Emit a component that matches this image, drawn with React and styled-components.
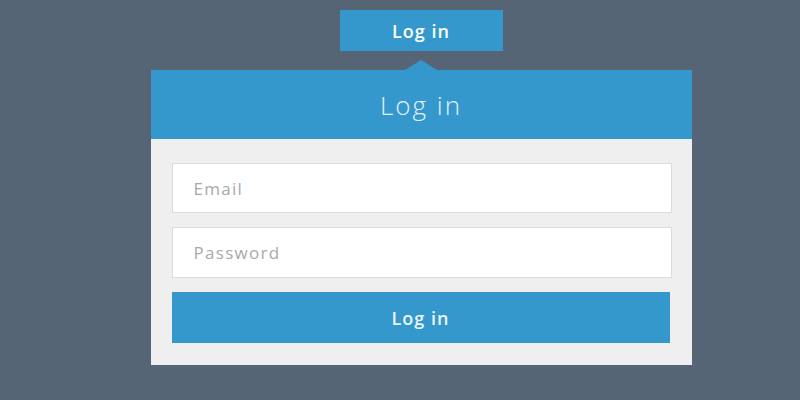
import React from "react";
import styled, { createGlobalStyle } from "styled-components";

const GlobalStyle = createGlobalStyle`
  html, body {
    margin: 0;
    padding: 0;
    background: #566576;
    font-family: "Open Sans", "Liberation Sans", sans-serif;
  }
`;

// whole page
const Page = styled.div`
  width: 800px;
  height: 400px;
  box-sizing: border-box;
  padding: 10px 0 0 42px;
  display: flex;
  flex-direction: column;
  align-items: center;
`;

const ToggleButton = styled.button`
  all: unset;
  box-sizing: border-box;
  width: 163px;
  height: 41px;
  display: flex;
  align-items: center;
  justify-content: center;
  background: #3498cd;
  color: #ffffff;
  font-family: "Open Sans", sans-serif;
  font-weight: 600;
  font-size: 18px;
  letter-spacing: 1px;
  cursor: pointer;
`;

// popup panel
const Panel = styled.div`
  position: relative;
  margin-top: 19px;
  width: 541px;
  background: #efefef;

  &::before {
    content: "";
    position: absolute;
    top: -10px;
    left: 50%;
    transform: translateX(-50%);
    border-left: 16px solid transparent;
    border-right: 16px solid transparent;
    border-bottom: 10px solid #3498cd;
  }
`;

const PanelHeader = styled.h2`
  margin: 0;
  height: 69px;
  display: flex;
  align-items: center;
  justify-content: center;
  background: #3498cd;
  color: #e4f1fa;
  font-weight: 300;
  font-size: 26px;
  letter-spacing: 2px;
`;

const Form = styled.form`
  display: flex;
  flex-direction: column;
  gap: 14px;
  padding: 24px 20px 22px 21px;
`;

const Input = styled.input`
  box-sizing: border-box;
  height: ${(props) => props.tall ? "51px" : "50px"};
  width: 100%;
  border: 1px solid #dcdcdc;
  background: #ffffff;
  padding: 0 21px;
  font-family: "Open Sans", sans-serif;
  font-size: 17px;
  letter-spacing: 1.3px;
  color: #555;
  outline: none;

  &::placeholder {
    color: #a9a9a9;
  }
`;

const SubmitButton = styled.button`
  height: 51px;
  width: 498px;
  border: none;
  background: #3498cd;
  color: #eaf5fc;
  font-family: "Open Sans", sans-serif;
  font-weight: 600;
  font-size: 18px;
  letter-spacing: 1px;
  cursor: pointer;
`;

function App() {
  return (
    <>
      <GlobalStyle />
      <Page>
        <ToggleButton>Log in</ToggleButton>
        <Panel>
          <PanelHeader>Log in</PanelHeader>
          <Form onSubmit={(e) => e.preventDefault()}>
            <Input type="email" placeholder="Email" />
            <Input type="password" placeholder="Password" tall />
            <SubmitButton type="submit">Log in</SubmitButton>
          </Form>
        </Panel>
      </Page>
    </>
  );
}

export default App;
